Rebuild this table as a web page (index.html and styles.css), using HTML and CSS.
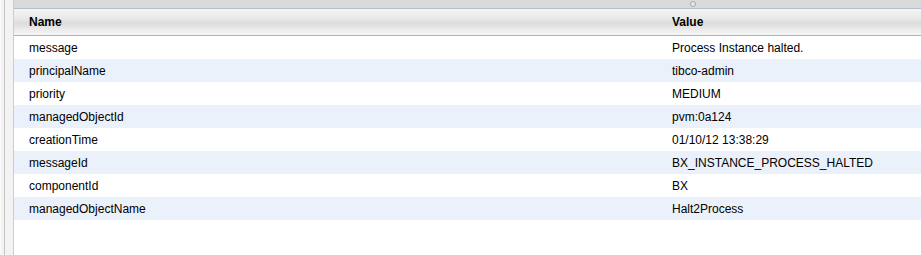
FILE: index.html
```html
<!DOCTYPE html>
<html>
<head>
<meta charset="utf-8">
<link rel="stylesheet" href="styles.css">
</head>
<body>
<div class="page">
  <div class="gutter"><div class="gutter-line"></div></div>
  <div class="panel">
    <div class="topbar"><span class="grip"></span></div>
    <div class="grid">
      <div class="hcell">Name</div><div class="hcell">Value</div>
      <div class="cell">message</div><div class="cell">Process Instance halted.</div>
      <div class="cell alt">principalName</div><div class="cell alt">tibco-admin</div>
      <div class="cell">priority</div><div class="cell">MEDIUM</div>
      <div class="cell alt">managedObjectId</div><div class="cell alt">pvm:0a124</div>
      <div class="cell">creationTime</div><div class="cell">01/10/12 13:38:29</div>
      <div class="cell alt">messageId</div><div class="cell alt">BX_INSTANCE_PROCESS_HALTED</div>
      <div class="cell">componentId</div><div class="cell">BX</div>
      <div class="cell alt">managedObjectName</div><div class="cell alt">Halt2Process</div>
    </div>
  </div>
</div>
</body>
</html>
```

FILE: styles.css
```css
html, body {
  margin: 0;
  padding: 0;
  background: #ffffff;
}
.page {
  display: flex;
  height: 255px;
  font-family: "Liberation Sans", Arial, sans-serif;
  font-size: 12px;
  color: #000;
}
.gutter {
  width: 13px;
  border-right: 1px solid #cdcdcd;
  background: #f3f3f3;
  display: flex;
}
.gutter-line {
  width: 1px;
  margin-left: 4px;
  background: #c4c4c4;
  box-shadow: -4px 0 0 0 #f9f9f9;
}
.panel {
  flex: 1;
  display: flex;
  flex-direction: column;
}
.topbar {
  height: 8px;
  background: #dadada;
  display: flex;
  align-items: center;
  padding-left: 676px;
}
.grip {
  width: 4px;
  height: 4px;
  border-radius: 50%;
  border: 1px solid #a8a8a8;
  background: #e8e8e8;
}
.grid {
  display: grid;
  grid-template-columns: 643px 1fr;
}
.hcell {
  height: 26px;
  border-top: 1px solid #b4bfcc;
  border-bottom: 1px solid #a9b6c5;
  background: linear-gradient(#f4f4f4 0%, #e9e9e9 35%, #dcdcdc 55%, #ececec 80%, #f4f4f4 100%);
  font-weight: bold;
  padding-left: 15px;
  display: flex;
  align-items: center;
}
.cell {
  height: 23px;
  padding-left: 15px;
  display: flex;
  align-items: center;
}
.alt {
  background: #ebf1fb;
}
```
